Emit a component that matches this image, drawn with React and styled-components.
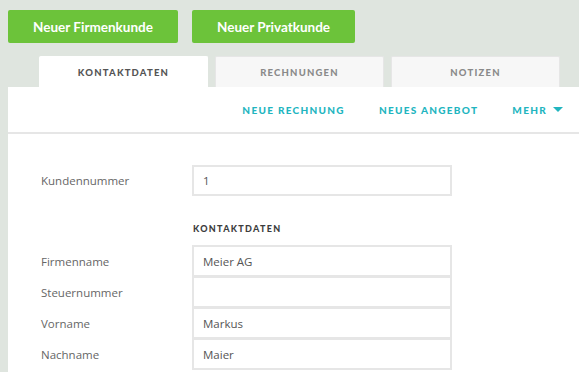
import React from "react";
import styled, { createGlobalStyle } from "styled-components";

const Global = createGlobalStyle`
  html, body { margin: 0; padding: 0; background: #dfe5df; }
  body { font-family: "Open Sans", "Liberation Sans", sans-serif; overflow: hidden; }
  * { box-sizing: border-box; }
`;

const Page = styled.div`
  width: 579px;
  height: 372px;
  padding: 10px 0 0 8px;
  overflow: hidden;
`;

const ButtonRow = styled.div`
  display: flex;
  gap: 14px;
`;

const GreenButton = styled.button`
  height: 33px;
  width: ${(p) => p.$w}px;
  border: none;
  border-radius: 2px;
  background: #6cc33a;
  color: #fff;
  font-family: Lato, "Open Sans", sans-serif;
  font-weight: 700;
  font-size: 13.5px;
  padding: 0;
  cursor: pointer;
`;

const TabRow = styled.div`
  display: flex;
  gap: 7px;
  margin-top: 13px;
  padding-left: 31px;
`;

const Tab = styled.div`
  width: 169px;
  height: 31px;
  display: flex;
  align-items: center;
  justify-content: center;
  font-family: Lato, sans-serif;
  font-weight: 900;
  font-size: 9.5px;
  letter-spacing: 1.2px;
  color: ${(p) => (p.$active ? "#555" : "#8a8a8a")};
  background: ${(p) => (p.$active ? "#fff" : "#f7f7f7")};
  border: 1px solid ${(p) => (p.$active ? "#fff" : "#e6e6e6")};
  border-bottom: none;
  border-radius: 2px 2px 0 0;
  padding-top: 1px;
`;

const Panel = styled.div`
  background: #fff;
  height: 300px;
`;

const ActionBar = styled.div`
  height: 47px;
  display: flex;
  justify-content: flex-end;
  align-items: center;
  gap: 34px;
  padding-right: 16px;
  border-bottom: 2px solid #e6e6e6;
`;

const Action = styled.a`
  display: flex;
  align-items: center;
  gap: 6px;
  color: #22b5bf;
  font-family: Lato, sans-serif;
  font-weight: 900;
  font-size: 10px;
  letter-spacing: 1.3px;
  cursor: pointer;
`;

const Caret = styled.span`
  width: 0;
  height: 0;
  border-left: 5px solid transparent;
  border-right: 5px solid transparent;
  border-top: 5px solid #22b5bf;
`;

const Form = styled.div`
  padding: 31px 0 0 33px;
`;

const Row = styled.div`
  display: flex;
  align-items: center;
  height: ${(p) => (p.$h ? p.$h : 32)}px;
  & + & {
    margin-top: -1px;
  }
`;

const Label = styled.div`
  width: 151px;
  font-size: 11.5px;
  color: #666;
`;

const Field = styled.div`
  width: 260px;
  height: 100%;
  border: 2px solid #e6e6e6;
  display: flex;
  align-items: center;
  padding-left: 9px;
  font-size: 11.5px;
  color: #555;
`;

const SectionHead = styled.div`
  margin-left: 152px;
  height: 49px;
  display: flex;
  align-items: center;
  padding-top: 15px;
  font-family: Lato, sans-serif;
  font-weight: 900;
  font-size: 9px;
  letter-spacing: 1.3px;
  color: #3d3d3d;
`;

const fields = [
  ["Firmenname", "Meier AG"],
  ["Steuernummer", ""],
  ["Vorname", "Markus"],
  ["Nachname", "Maier"],
];

export default function App() {
  return (
    <>
      <Global />
      <Page>
        <ButtonRow>
          <GreenButton $w={170}>Neuer Firmenkunde</GreenButton>
          <GreenButton $w={163}>Neuer Privatkunde</GreenButton>
        </ButtonRow>
        <TabRow>
          <Tab $active>KONTAKTDATEN</Tab>
          <Tab>RECHNUNGEN</Tab>
          <Tab>NOTIZEN</Tab>
        </TabRow>
        <Panel>
          <ActionBar>
            <Action>NEUE RECHNUNG</Action>
            <Action>NEUES ANGEBOT</Action>
            <Action>
              MEHR <Caret />
            </Action>
          </ActionBar>
          <Form>
            <Row $h={31}>
              <Label>Kundennummer</Label>
              <Field>1</Field>
            </Row>
            <SectionHead>KONTAKTDATEN</SectionHead>
            {fields.map(([l, v]) => (
              <Row key={l}>
                <Label>{l}</Label>
                <Field>{v}</Field>
              </Row>
            ))}
          </Form>
        </Panel>
      </Page>
    </>
  );
}
